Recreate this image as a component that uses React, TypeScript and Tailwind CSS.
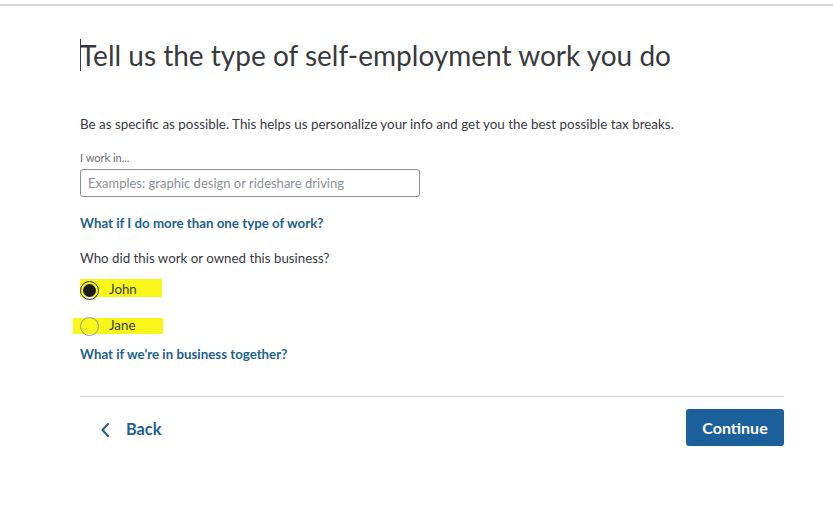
import React from 'react';

const font = { fontFamily: 'Lato, "Noto Sans", sans-serif' };

const Radio = ({ label, checked, hl }: { label: string; checked?: boolean; hl: string }) => (
  <label className="relative flex items-center h-[20px] gap-[10px]">
    <span className={`absolute ${hl} bg-[#f7f719]`} />
    <span
      className={`relative flex items-center justify-center w-[19px] h-[19px] rounded-full border ${
        checked ? 'border-[#2b2b1a]' : 'border-[#9a9a9a]'
      } ml-[80px]`}
    >
      {checked && <span className="w-[13px] h-[13px] rounded-full bg-[#1c1c1c]" />}
    </span>
    <span className="relative text-[13.3px] text-[#393a3d]">{label}</span>
  </label>
);

export default function App() {
  return (
    <div className="w-[833px] h-[516px] bg-white" style={font}>
      <div className="pt-[4px]">
        <div className="h-[2px] bg-[#d4d4d4]" />
      </div>
      <div className="pl-[80px] pr-[49px]">
        <h1 className="relative mt-[29px] text-[28px] leading-[40px] text-[#393a3d] font-normal">
          <span className="absolute left-0 top-[4px] w-px h-[32px] bg-[#393a3d]" />
          Tell us the type of self-employment work you do
        </h1>
        <p className="mt-[40px] text-[13.4px] leading-[18px] text-[#393a3d]">
          Be as specific as possible. This helps us personalize your info and get you the best possible tax breaks.
        </p>
        <div className="mt-[18px] text-[11px] leading-[14px] text-[#6b6c72]">I work in...</div>
        <input
          className="mt-[4px] w-[340px] h-[28px] border border-[#8d9096] rounded-[3px] px-[7px] text-[13px] text-[#393a3d] placeholder:text-[#8d9096] outline-none"
          placeholder="Examples: graphic design or rideshare driving"
        />
        <div className="mt-[17px] text-[13.3px] leading-[18px] font-bold text-[#21618c]">
          What if I do more than one type of work?
        </div>
        <div className="mt-[17px] text-[13.3px] leading-[18px] text-[#393a3d]">
          Who did this work or owned this business?
        </div>
      </div>
      <div className="mt-[13px] flex flex-col gap-[16px]">
        <Radio label="John" checked hl="left-[80px] top-[-1px] w-[82px] h-[18px]" />
        <Radio label="Jane" hl="left-[73px] top-[2px] w-[90px] h-[16px]" />
      </div>
      <div className="pl-[80px] pr-[49px]">
        <div className="mt-[9px] text-[13.3px] leading-[18px] font-bold text-[#21618c]">
          What if we're in business together?
        </div>
        <div className="mt-[33px] h-px bg-[#dcdcdc]" />
        <div className="mt-[12px] flex items-center justify-between">
          <button className="flex items-center gap-[16px] pl-[20px] pt-[4px] text-[16.3px] font-bold text-[#21618c]">
            <svg width="10" height="16" viewBox="0 0 10 16" fill="none">
              <path d="M8 2 L2.5 8 L8 14" stroke="#21618c" strokeWidth="2" strokeLinecap="round" strokeLinejoin="round" />
            </svg>
            Back
          </button>
          <button className="w-[98px] h-[37px] rounded-[3px] bg-[#1b5f9b] text-white text-[16px] font-bold">
            Continue
          </button>
        </div>
      </div>
    </div>
  );
}
